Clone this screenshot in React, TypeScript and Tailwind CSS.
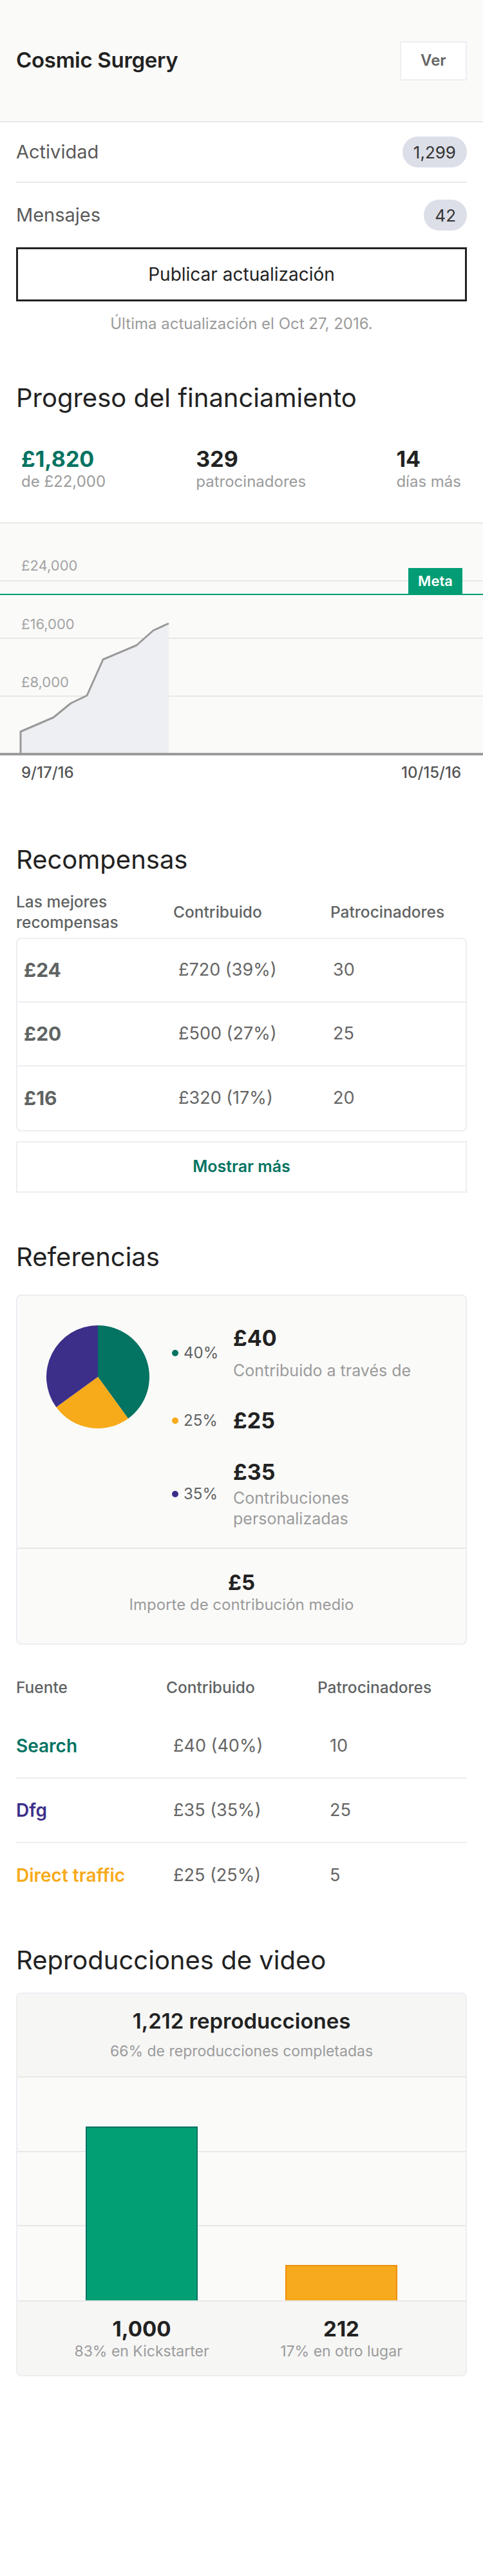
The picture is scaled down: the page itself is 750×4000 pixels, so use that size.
import React from "react";

const rewards = [
  { amt: "£24", contrib: "£720 (39%)", backers: "30" },
  { amt: "£20", contrib: "£500 (27%)", backers: "25" },
  { amt: "£16", contrib: "£320 (17%)", backers: "20" },
];

const sources = [
  { name: "Search", color: "text-[#037362]", contrib: "£40 (40%)", backers: "10" },
  { name: "Dfg", color: "text-[#3b2f8a]", contrib: "£35 (35%)", backers: "25" },
  { name: "Direct traffic", color: "text-[#f7aa1a]", contrib: "£25 (25%)", backers: "5" },
];

function FundingChart() {
  return (
    <div className="relative h-[362px] border-t-2 border-[#e8e8e8] bg-[#fafaf9]">
      <svg className="absolute inset-0" width="750" height="360" viewBox="0 0 750 360">
        <line x1="0" y1="89" x2="750" y2="89" stroke="#e8e8e8" strokeWidth="2" />
        <line x1="0" y1="178" x2="750" y2="178" stroke="#e8e8e8" strokeWidth="2" />
        <line x1="0" y1="268" x2="750" y2="268" stroke="#e8e8e8" strokeWidth="2" />
        <polygon
          points="32,356 32,323 83,301 110,279 135,267 160,211 212,189 238,166 262,155 262,356"
          fill="#eeeff2"
        />
        <polyline
          points="32,357 32,323 83,301 110,279 135,267 160,211 212,189 238,166 262,155"
          fill="none"
          stroke="#999999"
          strokeWidth="3"
          strokeLinejoin="round"
        />
        <line x1="0" y1="110" x2="750" y2="110" stroke="#029d74" strokeWidth="2" />
        <line x1="0" y1="358" x2="750" y2="358" stroke="#9b9b9b" strokeWidth="4" />
      </svg>
      <span className="absolute left-[33px] top-[52px] text-[22px] leading-[26px] text-[#a3a3a3]">£24,000</span>
      <span className="absolute left-[33px] top-[143px] text-[22px] leading-[26px] text-[#a3a3a3]">£16,000</span>
      <span className="absolute left-[33px] top-[233px] text-[22px] leading-[26px] text-[#a3a3a3]">£8,000</span>
      <span className="absolute left-[634px] top-[69px] flex h-[41px] w-[84px] items-center justify-center bg-[#029d74] text-[22px] font-semibold text-white">
        Meta
      </span>
    </div>
  );
}

function Pie() {
  return (
    <svg width="160" height="160" viewBox="0 0 160 160" className="shrink-0">
      <path d="M80,80 L80,0 A80,80 0 0 1 127.02,144.72 Z" fill="#037362" />
      <path d="M80,80 L127.02,144.72 A80,80 0 0 1 15.28,127.02 Z" fill="#f7aa1a" />
      <path d="M80,80 L15.28,127.02 A80,80 0 0 1 80,0 Z" fill="#3b2f8a" />
    </svg>
  );
}

function Legend({ color, pct }: { color: string; pct: string }) {
  return (
    <div className="flex w-[95px] shrink-0 items-center gap-[8px]">
      <span className={`h-[10px] w-[10px] rounded-full ${color}`} />
      <span className="text-[24px] leading-[30px] text-[#5f6363]">{pct}</span>
    </div>
  );
}

export default function App() {
  return (
    <div className="min-h-[4000px] w-[750px] bg-white font-['Inter','Noto_Sans',sans-serif] text-[#222]">
      {/* Header */}
      <div className="flex h-[190px] items-center justify-between border-b-2 border-[#e8e8e8] bg-[#fafaf8] px-[25px]">
        <h1 className="text-[33px] font-semibold tracking-[-0.3px] text-[#222]">Cosmic Surgery</h1>
        <button className="flex h-[61px] w-[104px] items-center justify-center border-2 border-[#eeeef2] bg-white text-[24px] font-semibold text-[#666]">
          Ver
        </button>
      </div>

      <div className="px-[25px]">
        <div className="flex h-[94px] items-center justify-between border-b-2 border-[#e8e8e8]">
          <span className="text-[29px] text-[#5a5a5a]">Actividad</span>
          <span className="flex h-[48px] items-center rounded-full bg-[#dcdee8] px-[17px] text-[26px] text-[#333]">1,299</span>
        </div>
        <div className="flex h-[100px] items-center justify-between">
          <span className="text-[29px] text-[#5a5a5a]">Mensajes</span>
          <span className="flex h-[48px] items-center rounded-full bg-[#dcdee8] px-[17px] text-[26px] text-[#333]">42</span>
        </div>
        <button className="flex h-[84px] w-full items-center justify-center border-[3px] border-[#222] text-[28px] text-[#222]">
          Publicar actualización
        </button>
        <p className="mt-[20px] text-center text-[24px] leading-[30px] text-[#9b9b9b]">
          Última actualización el Oct 27, 2016.
        </p>

        <h2 className="mt-[76px] text-[40px] leading-[48px] text-[#222]">Progreso del financiamiento</h2>
      </div>

      {/* Stats */}
      <div className="mt-[51px] flex justify-between pl-[33px] pr-[34px]">
        <div>
          <div className="text-[34px] font-bold leading-[40px] text-[#037362]">£1,820</div>
          <div className="text-[24px] leading-[30px] text-[#9b9b9b]">de £22,000</div>
        </div>
        <div>
          <div className="text-[34px] font-bold leading-[40px] text-[#222]">329</div>
          <div className="text-[24px] leading-[30px] text-[#9b9b9b]">patrocinadores</div>
        </div>
        <div>
          <div className="text-[34px] font-bold leading-[40px] text-[#222]">14</div>
          <div className="text-[24px] leading-[30px] text-[#9b9b9b]">días más</div>
        </div>
      </div>

      <div className="mt-[48px]">
        <FundingChart />
      </div>
      <div className="mt-[12px] flex justify-between pl-[33px] pr-[34px] text-[24px] font-medium leading-[30px] text-[#555]">
        <span>9/17/16</span>
        <span>10/15/16</span>
      </div>

      {/* Recompensas */}
      <div className="px-[25px]">
        <h2 className="mt-[96px] text-[40px] leading-[48px] text-[#222]">Recompensas</h2>
        <div className="mt-[25px] grid h-[64px] grid-cols-[244px_244px_1fr] items-center text-[24.5px] font-medium leading-[32px] text-[#5f6363]">
          <span>
            Las mejores
            <br />
            recompensas
          </span>
          <span>Contribuido</span>
          <span>Patrocinadores</span>
        </div>
        <div className="mt-[8px] rounded-[8px] border-2 border-[#eeeef2]">
          {rewards.map((r, i) => (
            <div
              key={r.amt}
              className={`grid h-[99px] grid-cols-[240px_240px_1fr] items-center pl-[10px] ${
                i < rewards.length - 1 ? "border-b-2 border-[#eeeef2]" : ""
              }`}
            >
              <span className="text-[30px] font-bold text-[#5f6363]">{r.amt}</span>
              <span className="text-[27px] text-[#666]">{r.contrib}</span>
              <span className="text-[27px] text-[#666]">{r.backers}</span>
            </div>
          ))}
        </div>
        <button className="mt-[15px] flex h-[80px] w-full items-center justify-center border-2 border-[#eeeef2] text-[25px] font-semibold text-[#037362]">
          Mostrar más
        </button>

        {/* Referencias */}
        <h2 className="mt-[76px] text-[40px] leading-[48px] text-[#222]">Referencias</h2>
        <div className="mt-[34px] rounded-[8px] border-2 border-[#eeeef2] bg-[#fafaf9]">
          <div className="flex h-[393px] border-b-2 border-[#e8e8e8] pl-[45px] pt-[46px]">
            <Pie />
            <div className="ml-[35px] flex flex-col">
              <div className="flex items-center">
                <Legend color="bg-[#037362]" pct="40%" />
                <div>
                  <div className="text-[34px] font-bold leading-[40px] text-[#222]">£40</div>
                  <div className="mt-[15px] text-[25px] leading-[30px] text-[#9b9b9b]">Contribuido a través de</div>
                </div>
              </div>
              <div className="mt-[43px] flex items-center">
                <Legend color="bg-[#f7aa1a]" pct="25%" />
                <div className="text-[34px] font-bold leading-[40px] text-[#222]">£25</div>
              </div>
              <div className="mt-[40px] flex items-center">
                <Legend color="bg-[#3b2f8a]" pct="35%" />
                <div>
                  <div className="text-[34px] font-bold leading-[40px] text-[#222]">£35</div>
                  <div className="mt-[4px] text-[25px] leading-[32px] text-[#9b9b9b]">
                    Contribuciones
                    <br />
                    personalizadas
                  </div>
                </div>
              </div>
            </div>
          </div>
          <div className="flex h-[147px] flex-col items-center pt-[32px]">
            <div className="text-[33px] font-bold leading-[40px] text-[#222]">£5</div>
            <div className="text-[24px] leading-[30px] text-[#9b9b9b]">Importe de contribución medio</div>
          </div>
        </div>

        {/* Sources */}
        <div className="mt-[51px] grid grid-cols-[233px_235px_1fr] text-[24.5px] font-medium leading-[30px] text-[#5f6363]">
          <span>Fuente</span>
          <span>Contribuido</span>
          <span>Patrocinadores</span>
        </div>
        <div className="mt-[27px]">
          {sources.map((s, i) => (
            <div
              key={s.name}
              className={`grid h-[100px] grid-cols-[244px_243px_1fr] items-center ${
                i < sources.length - 1 ? "border-b-2 border-[#eeeef2]" : ""
              }`}
            >
              <span className={`text-[28px] font-semibold ${s.color}`}>{s.name}</span>
              <span className="text-[27px] text-[#666]">{s.contrib}</span>
              <span className="text-[27px] text-[#666]">{s.backers}</span>
            </div>
          ))}
        </div>

        {/* Video */}
        <h2 className="mt-[58px] text-[40px] leading-[48px] text-[#222]">Reproducciones de video</h2>
        <div className="mt-[26px] overflow-hidden rounded-[8px] border-2 border-[#eeeef2]">
          <div className="flex h-[130px] flex-col items-center border-b-2 border-[#e8e8e8] bg-[#f6f6f5] pt-[23px]">
            <div className="text-[33px] font-semibold leading-[38px] text-[#222]">1,212 reproducciones</div>
            <div className="mt-[13px] text-[23px] leading-[30px] text-[#9b9b9b]">66% de reproducciones completadas</div>
          </div>
          <div className="relative h-[348px] border-b-2 border-[#e8e8e8] bg-[#fafaf9]">
            <div className="absolute left-0 right-0 top-[114px] h-[2px] bg-[#e8e8e8]" />
            <div className="absolute left-0 right-0 top-[229px] h-[2px] bg-[#e8e8e8]" />
            <div className="relative grid h-full grid-cols-2 items-end px-[38px]">
              <div className="flex justify-center">
                <div className="h-[270px] w-[174px] border-2 border-b-0 border-[#037362] bg-[#029f74]" />
              </div>
              <div className="flex justify-center">
                <div className="h-[55px] w-[174px] border-2 border-b-0 border-[#f08f0c] bg-[#f7aa1d]" />
              </div>
            </div>
          </div>
          <div className="grid h-[114px] grid-cols-2 bg-[#f6f6f5] px-[38px] pt-[22px]">
            <div className="flex flex-col items-center">
              <div className="text-[33px] font-bold leading-[40px] text-[#222]">1,000</div>
              <div className="text-[23px] leading-[30px] text-[#9b9b9b]">83% en Kickstarter</div>
            </div>
            <div className="flex flex-col items-center">
              <div className="text-[33px] font-bold leading-[40px] text-[#222]">212</div>
              <div className="text-[23px] leading-[30px] text-[#9b9b9b]">17% en otro lugar</div>
            </div>
          </div>
        </div>
      </div>
    </div>
  );
}
